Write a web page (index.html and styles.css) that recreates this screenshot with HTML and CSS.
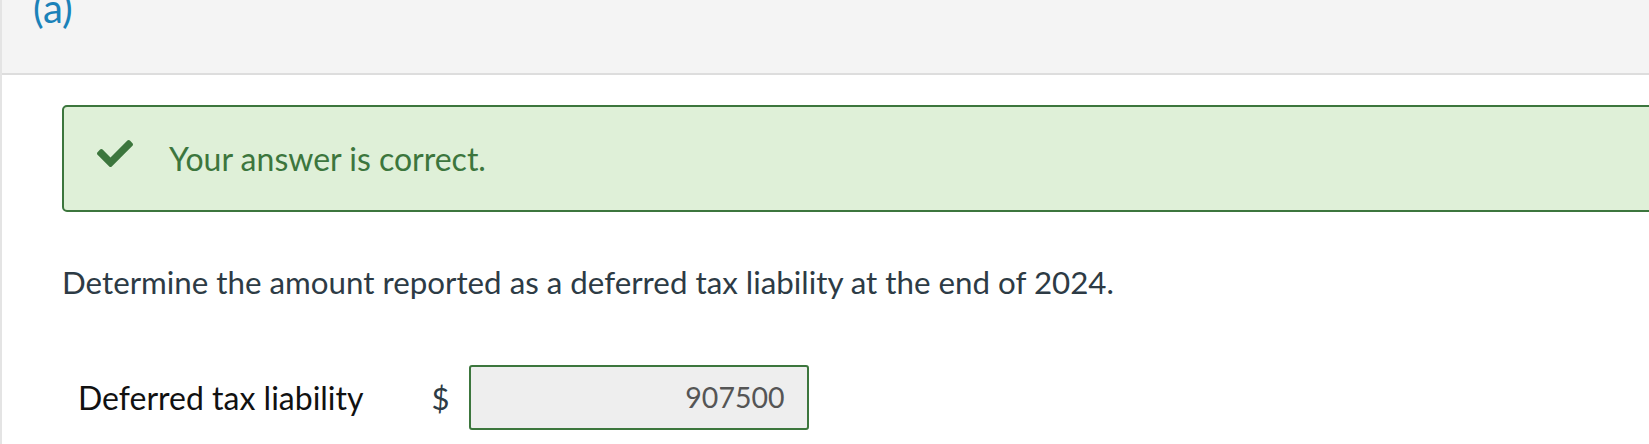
FILE: index.html
```html
<!DOCTYPE html>
<html lang="en">
<head>
    <meta charset="UTF-8">
    <title>Part (a)</title>
<link rel="stylesheet" href="styles.css">
</head>
<body>
    <div class="part">
        <div class="part-header">
            <span class="part-label">(a)</span>
        </div>
        <div class="part-body">
            <div class="feedback correct">
                <svg class="feedback-icon" viewBox="0 64 512 384" width="36" height="27">
                    <path d="M173.898 439.404l-166.4-166.4c-9.997-9.997-9.997-26.206 0-36.204l36.203-36.204c9.997-9.998 26.207-9.998 36.204 0L192 312.69 432.095 72.596c9.997-9.997 26.207-9.997 36.204 0l36.203 36.204c9.997 9.997 9.997 26.206 0 36.204l-294.4 294.401c-9.998 9.997-26.207 9.997-36.204-.001z"/>
                </svg>
                <span class="feedback-text">Your answer is correct.</span>
            </div>

            <p class="question">Determine the amount reported as a deferred tax liability at the end of 2024.</p>

            <div class="answer-row">
                <label class="answer-label">Deferred tax liability</label>
                <span class="currency">$</span>
                <div class="answer-input">907500</div>
            </div>
        </div>
    </div>
</body>
</html>
```

FILE: styles.css
```css
html, body {
    margin: 0;
    height: 100%;
    overflow: hidden;
    background: #fff;
}
body {
    font-family: Lato, "Open Sans", sans-serif;
}
.part {
    min-height: 100%;
    border-left: 2px solid #e4e4e4;
}
.part-header {
    height: 73px;
    background: #f4f4f4;
    border-bottom: 2px solid #dddddd;
    padding-left: 31px;
    overflow: hidden;
}
.part-label {
    display: block;
    margin-top: -16px;
    font-size: 40px;
    line-height: 48px;
    color: #1b82b9;
}
.part-body {
    padding: 30px 0 0 60px;
}
.feedback {
    display: flex;
    align-items: center;
    height: 103px;
    margin-right: -40px;
    padding-left: 33px;
    border: 2px solid #3c763d;
    border-radius: 5px;
    background: #dff0d8;
}
.feedback-icon {
    fill: #3c763d;
    margin-bottom: 11px;
    margin-right: 36px;
}
.feedback-text {
    font-size: 32px;
    line-height: 36px;
    color: #3c763d;
}
.question {
    margin: 52px 0 0;
    font-size: 31.3px;
    line-height: 36px;
    color: #2d3b45;
}
.answer-row {
    display: flex;
    align-items: center;
    margin-top: 65px;
    padding-left: 16px;
}
.answer-label {
    font-size: 32px;
    line-height: 36px;
    color: #111;
}
.currency {
    margin-left: 68px;
    margin-right: 19px;
    font-size: 31px;
    line-height: 36px;
    color: #2d3b45;
}
.answer-input {
    box-sizing: border-box;
    width: 340px;
    height: 65px;
    padding-right: 22px;
    border: 2px solid #3c763d;
    border-radius: 3px;
    background: #eeeeee;
    font-size: 28.5px;
    line-height: 61px;
    text-align: right;
    color: #555;
}
```
